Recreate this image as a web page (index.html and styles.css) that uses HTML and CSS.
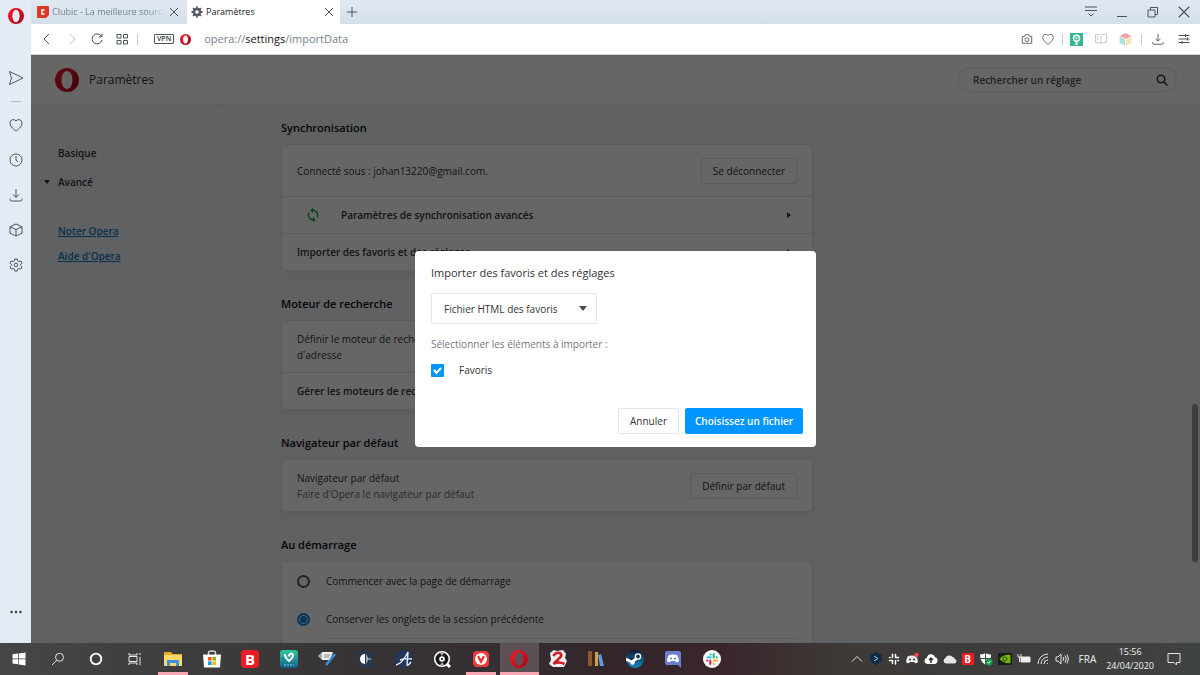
FILE: index.html
```html
<!DOCTYPE html>
<html lang="fr">
<head>
<meta charset="utf-8">
<title>Paramètres</title>
<link rel="stylesheet" href="styles.css">
</head>
<body>
<svg class="defs" aria-hidden="true">
  <defs>
    <linearGradient id="red" x1="0" y1="0" x2="1" y2="1"><stop offset="0" stop-color="#ff1b2d"/><stop offset="1" stop-color="#a70014"/></linearGradient>
    <linearGradient id="teal" x1="0" y1="0" x2="0" y2="1"><stop offset="0" stop-color="#2fc79d"/><stop offset="1" stop-color="#12608f"/></linearGradient>
    <linearGradient id="steam" x1="0" y1="0" x2="0" y2="1"><stop offset="0" stop-color="#0b1b3a"/><stop offset="1" stop-color="#1786be"/></linearGradient>
    <symbol id="opera" viewBox="0 0 24 24"><path fill="url(#red)" fill-rule="evenodd" d="M12 0a12 12 0 1 0 0 24a12 12 0 1 0 0-24zM12 3c3.400 0 5.500 4 5.500 9s-2.100 9-5.500 9s-5.500-4-5.500-9s2.100-9 5.500-9z"/></symbol>
    <symbol id="heart" viewBox="0 0 16 16"><path d="M8 14C4 11 2 9 2 6a3.300 3.300 0 0 1 6-2a3.300 3.300 0 0 1 6 2c0 3-2 5-6 8z"/></symbol>
    <symbol id="download" viewBox="0 0 16 16"><path d="M8 2v8M5 7.500l3 3l3-3M2 11.500v1q0 1.500 1.500 1.500h9q1.500 0 1.500-1.500v-1"/></symbol>
    <symbol id="close" viewBox="0 0 12 12"><path d="M2 2l8 8M10 2l-8 8"/></symbol>
    <symbol id="slack" viewBox="0 0 16 16"><path stroke-width="2" stroke-linecap="round" d="M6 1.500v4.500M2 6h1M10 2v4M14 6h-4M10 14.500V10M14 10h-1M6 14v-4M2 10h4"/></symbol>
  </defs>
</svg>
<div class="desktop">
  <div class="browser">
    <nav class="sidebar" aria-label="Barre latérale">
      <button class="opera-menu" aria-label="Menu Opera"><svg class="i16"><use href="#opera"/></svg></button>
      <button aria-label="Flow"><svg class="line i16" viewBox="0 0 16 16"><path d="M1.500 1.500L15 8L1.500 14.500L3.500 8z"/></svg></button>
      <span class="side-rule"></span>
      <button aria-label="Favoris"><svg class="line i16"><use href="#heart"/></svg></button>
      <button aria-label="Historique"><svg class="line i16" viewBox="0 0 16 16"><circle cx="8" cy="8" r="6"/><path d="M8 4v4l2 2"/></svg></button>
      <button aria-label="Téléchargements"><svg class="line i16"><use href="#download"/></svg></button>
      <button aria-label="Extensions"><svg class="line i16" viewBox="0 0 16 16"><path d="M8 2l6 2.800v6.400L8 14l-6-2.800V4.800zM2 4.800l6 2.700l6-2.700M8 7.500V14"/></svg></button>
      <button aria-label="Réglages"><svg class="line i16" viewBox="0 0 16 16"><path d="M6.800 2h2.400l.5 1.900 1.200.7 1.900-.6 1.200 2.100-1.400 1.400v1l1.400 1.400-1.200 2.100-1.900-.6-1.200.7-.5 1.900H6.800l-.5-1.900-1.200-.7-1.900.6L2 9.900l1.400-1.400v-1L2 6.100 3.200 4l1.900.6 1.200-.7z"/><circle cx="8" cy="8" r="1.800"/></svg></button>
      <button class="more" aria-label="Plus"><svg class="i16" viewBox="0 0 16 16" fill="#333"><circle cx="3.500" cy="8" r="1.200"/><circle cx="8" cy="8" r="1.200"/><circle cx="12.500" cy="8" r="1.200"/></svg></button>
    </nav>
    <div class="window">
      <header class="tabs">
        <div class="tab">
          <svg class="i12" viewBox="0 0 12 12"><path fill="#d93a26" d="M0 1q0-1 1-1h10q1 0 1 1v8l-3 3H1q-1 0-1-1z"/><path fill="none" stroke="#fff" stroke-width="1.400" d="M7.500 4H5v4h2.500"/></svg>
          <span class="tab-title faded">Clubic - La meilleure source</span>
          <button aria-label="Fermer l'onglet"><svg class="line i12"><use href="#close"/></svg></button>
        </div>
        <div class="tab active">
          <svg class="i12" viewBox="0 0 12 12"><circle cx="6" cy="6" r="3" fill="none" stroke="#555c63" stroke-width="2.400"/><path stroke="#555c63" stroke-width="2" d="M6 .5v2M6 9.500v2M.5 6h2M9.500 6h2M2.100 2.100l1.400 1.400M8.500 8.500l1.400 1.400M9.900 2.100L8.500 3.500M3.500 8.500L2.100 9.900"/></svg>
          <span class="tab-title">Paramètres</span>
          <button aria-label="Fermer l'onglet"><svg class="line i12"><use href="#close"/></svg></button>
        </div>
        <button class="new-tab" aria-label="Nouvel onglet"><svg class="line i12" viewBox="0 0 12 12"><path d="M6 1v10M1 6h10"/></svg></button>
        <div class="window-buttons">
          <button aria-label="Menu des onglets"><svg class="line i14" viewBox="0 0 14 14"><path d="M1 2h12M1 5.500h12M4.500 8.500L7 11l2.500-2.500"/></svg></button>
          <button aria-label="Réduire"><svg class="line i14" viewBox="0 0 14 14"><path d="M2 11.500h10"/></svg></button>
          <button aria-label="Restaurer"><svg class="line i14" viewBox="0 0 14 14"><path d="M2 5h7v7H2zM4.500 5V2.500h7v7H9"/></svg></button>
          <button aria-label="Fermer"><svg class="line i14" viewBox="0 0 12 12"><path d="M1.500 1.500l9 9M10.500 1.500l-9 9"/></svg></button>
        </div>
      </header>
      <div class="toolbar">
        <button aria-label="Précédent"><svg class="line i14" viewBox="0 0 14 14"><path d="M9 2L4 7l5 5"/></svg></button>
        <button class="off" aria-label="Suivant"><svg class="line i14" viewBox="0 0 14 14"><path d="M5 2l5 5l-5 5"/></svg></button>
        <button aria-label="Recharger"><svg class="line i14" viewBox="0 0 14 14"><path d="M11.500 4.500A5 5 0 1 0 12 8M12 1.500v3.300H8.700"/></svg></button>
        <button aria-label="Accès rapide"><svg class="line i14" viewBox="0 0 14 14"><path d="M2 2.500h4v3.500H2zM8.500 2.500h4v3.500h-4zM2 8.500h4V12H2zM8.500 8.500h4V12h-4z"/></svg></button>
        <span class="bar left"></span>
        <button class="vpn">VPN</button>
        <svg class="i11"><use href="#opera"/></svg>
        <span class="url">opera://<b>settings</b>/importData</span>
        <div class="tools">
          <button class="snap" aria-label="Capture"><svg class="line i12" viewBox="0 0 14 14"><path d="M1.500 4H4l1-2h4l1 2h2.500v8h-11z"/><circle cx="7" cy="7.800" r="2.200"/></svg></button>
          <button aria-label="Ajouter aux favoris"><svg class="line i14"><use href="#heart"/></svg></button>
          <span class="bar first-bar"></span>
          <button aria-label="Extension verte"><svg class="i13" viewBox="0 0 13 13"><path fill="#35b597" d="M0 0h13v13H0z"/><circle cx="6.500" cy="5.300" r="3" fill="none" stroke="#fff" stroke-width="1.500"/><circle cx="6.500" cy="5.300" r="1" fill="#fff"/><path stroke="#fff" stroke-width="2" d="M6.500 8.500V12"/></svg></button>
          <button aria-label="Lecture"><svg class="i14" viewBox="0 0 14 14" fill="none" stroke="#ccc"><path d="M1.500 2.500h4.500l1 1l1-1h4.500v8H8.500L7 12l-1.500-1.500h-4zM7 4v7M3.500 4.500v4"/></svg></button>
          <button aria-label="Cube"><svg class="i13" viewBox="0 0 13 13"><path fill="#f3a0ad" d="M6.500 0L12.500 3L6.500 6L.5 3z"/><path fill="#a9e3d3" d="M.5 3.700l5.500 2.800v6.200L.5 9.700z"/><path fill="#fbe0b0" d="M12.500 3.700L7 6.500v6.200l5.500-3z"/></svg></button>
          <span class="bar"></span>
          <button aria-label="Téléchargements"><svg class="line i14"><use href="#download"/></svg></button>
          <button class="tune" aria-label="Configuration"><svg class="line i12" viewBox="0 0 12 12"><path d="M.5 2.500h11M.5 6h11M.5 9.500h11M7.500 1v3M9.500 4.500v3M4 8v3"/></svg></button>
        </div>
      </div>
      <div class="page">
        <header class="page-head">
          <svg class="i24"><use href="#opera"/></svg>
          <h1>Paramètres</h1>
          <label class="search"><input type="text" placeholder="Rechercher un réglage" aria-label="Rechercher un réglage"><svg class="i12" viewBox="0 0 12 12" fill="none" stroke="#333" stroke-width="1.500"><circle cx="5" cy="5" r="3.800"/><path d="M8 8l3.500 3.500"/></svg></label>
        </header>
        <div class="page-body">
          <aside class="menu">
            <a class="item" href="#">Basique</a>
            <a class="item open" href="#">Avancé</a>
            <a class="link first" href="#">Noter Opera</a>
            <a class="link" href="#">Aide d'Opera</a>
          </aside>
          <main>
            <section>
              <h2>Synchronisation</h2>
              <div class="card">
                <div class="row tall"><span>Connecté sous : johan13220@gmail.com.</span><button class="btn">Se déconnecter</button></div>
                <div class="row nav"><svg class="i16" viewBox="0 0 24 24" fill="#0b9c3c"><path d="M12 4V1L8 5l4 4V6c3.310 0 6 2.690 6 6 0 1.010-.25 1.970-.7 2.800l1.460 1.460A7.930 7.930 0 0 0 20 12c0-4.420-3.580-8-8-8zm0 14c-3.310 0-6-2.690-6-6 0-1.010.25-1.970.7-2.800L5.240 7.740A7.930 7.930 0 0 0 4 12c0 4.420 3.580 8 8 8v3l4-4-4-4v3z"/></svg><b>Paramètres de synchronisation avancés</b><i class="arrow"></i></div>
                <div class="row"><b>Importer des favoris et des réglages</b><i class="arrow"></i></div>
              </div>
            </section>
            <section>
              <h2>Moteur de recherche</h2>
              <div class="card">
                <div class="row tall"><span>Définir le moteur de recherche<br>d'adresse</span></div>
                <div class="row"><b>Gérer les moteurs de recherche</b><i class="arrow"></i></div>
              </div>
            </section>
            <section>
              <h2>Navigateur par défaut</h2>
              <div class="card">
                <div class="row tall"><span>Navigateur par défaut<br><small>Faire d'Opera le navigateur par défaut</small></span><button class="btn">Définir par défaut</button></div>
              </div>
            </section>
            <section>
              <h2>Au démarrage</h2>
              <div class="card startup">
                <label class="choice"><input type="radio" name="start">Commencer avec la page de démarrage</label>
                <label class="choice"><input type="radio" name="start" checked>Conserver les onglets de la session précédente</label>
                <hr>
              </div>
            </section>
          </main>
        </div>
        <div class="scrim">
          <div class="dialog" role="dialog" aria-labelledby="dialog-title">
            <h3 id="dialog-title">Importer des favoris et des réglages</h3>
            <select aria-label="Source"><option>Fichier HTML des favoris</option></select>
            <p>Sélectionner les éléments à importer :</p>
            <label class="check"><input type="checkbox" checked>Favoris</label>
            <div class="actions"><button class="btn">Annuler</button><button class="btn primary">Choisissez un fichier</button></div>
          </div>
        </div>
        <span class="scrollbar"></span>
      </div>
    </div>
  </div>
  <footer class="taskbar">
    <div class="apps">
      <button aria-label="Démarrer"><svg class="i14" viewBox="0 0 14 14" fill="#fff"><path d="M.5 2.300L6 1.500v5H.5zM6.700 1.400L13.500.5v6H6.700zM.5 7.200H6v5l-5.500-.8zM6.700 7.200h6.800v6.200l-6.800-1z"/></svg></button>
      <button aria-label="Recherche"><svg class="pale i14" viewBox="0 0 14 14"><circle cx="8.500" cy="5.300" r="4"/><path d="M5.500 8.500L1 13"/></svg></button>
      <button aria-label="Cortana"><svg class="i14" viewBox="0 0 14 14" fill="none" stroke="#fff" stroke-width="1.800"><circle cx="7" cy="7" r="5.300"/></svg></button>
      <button aria-label="Vue des tâches"><svg class="pale i14" viewBox="0 0 14 14"><path d="M1 1v2h8V1M1 4.500h8v5H1zM1 13v-2h8v2M12 1v2M12 5v8"/></svg></button>
      <button class="running" aria-label="Explorateur"><svg class="i18" viewBox="0 0 18 18"><path fill="#e9a82a" d="M0 2h7l1.500 2H18v11H0z"/><path fill="#ffd766" d="M0 5h18v11H0z"/><path fill="#3b93dd" d="M3 10h12v6h-3v-3H6v3H3z"/></svg></button>
      <button aria-label="Store"><svg class="i18" viewBox="0 0 18 18"><path fill="none" stroke="#ddd" stroke-width="1.400" d="M5.500 5V2.500q0-1.500 3.500-1.500t3.500 1.500V5"/><path fill="#fff" d="M0 4.500h18L17 17.500H1z"/><path fill="#f25022" d="M5 7h3.600v3.600H5z"/><path fill="#7fba00" d="M9.400 7H13v3.600H9.400z"/><path fill="#00a4ef" d="M5 11.400h3.600V15H5z"/><path fill="#ffb900" d="M9.400 11.400H13V15H9.400z"/></svg></button>
      <button aria-label="Bitdefender"><span class="bit">B</span></button>
      <button aria-label="Vault"><svg class="i18" viewBox="0 0 18 18"><rect width="18" height="18" rx="3" fill="url(#teal)"/><path fill="none" stroke="#fff" stroke-width="2" d="M4.500 4Q6 9 9 11Q14.500 6.500 12.500 4Q10 2.500 8.500 6.500"/><path stroke="#9cd" stroke-dasharray="2 1" d="M4 15h10"/></svg></button>
      <button aria-label="Notes"><svg class="i18" viewBox="0 0 18 18"><path fill="#aaa" d="M0 6l4-4v8z"/><path fill="#eee" d="M4 2h11l-3 8H4z"/><path stroke="#888" d="M6 5h6M6 7h5"/><path stroke="#3692e0" stroke-width="2.400" d="M17 4L8 15"/></svg></button>
      <button aria-label="Contraste"><svg class="i16" viewBox="0 0 16 16"><path fill="#29384a" d="M0 0h16v16H0z"/><path fill="#fff" d="M8 3v10A5 5 0 0 1 8 3z"/><path fill="#9aa5b0" d="M9 3q4 5 0 10z"/><path stroke="#ddd" d="M10 8h4"/></svg></button>
      <button aria-label="A"><svg class="i18" viewBox="0 0 18 18"><circle cx="9" cy="9" r="9" fill="#23345d"/><path fill="none" stroke="#e7ecf7" stroke-width="1.400" d="M1 15Q7 14 13 2l-1 13q1 1 4-3M5 10q5-2 12-1"/></svg></button>
      <button aria-label="Disque"><svg class="i18" viewBox="0 0 18 18"><path stroke="#fff" stroke-width="3" d="M13 13l4 4"/><circle cx="9" cy="9" r="7.300" fill="#171717" stroke="#fff" stroke-width="1.600"/><circle cx="9" cy="9" r="2.800" fill="#fff"/><circle cx="9" cy="9" r="1"/><path fill="#aaa" d="M7 3l2 3l2-3zM7 15l2-3l2 3z"/></svg></button>
      <button class="running" aria-label="Vivaldi"><svg class="i18" viewBox="0 0 18 18"><rect x="1" y="1" width="16" height="16" rx="4" fill="#ef3939"/><circle cx="9" cy="9" r="6" fill="#fff"/><path fill="none" stroke="#e33" stroke-width="2.400" stroke-linecap="round" d="M6.500 7L9 11.500L11.500 7"/></svg></button>
      <button class="running current" aria-label="Opera"><svg class="i18"><use href="#opera"/></svg></button>
      <button aria-label="2"><svg class="i18" viewBox="0 0 18 18"><path fill="#eee" d="M1 3l4-3l3 1l6-1l3 4l-1 4l2 3l-3 6H4l-4-3l2-4z"/><path fill="none" stroke="#d31c25" stroke-width="2.600" d="M4.500 6q2-4 6-3q4 2-1 6l-5 5q5-3 11 0"/></svg></button>
      <button aria-label="Livres"><svg class="i18" viewBox="0 0 18 18"><path fill="#8a5a2e" d="M1 1h4v15H1z"/><path fill="#3a2a1c" d="M5 3h3v13H5z"/><path fill="#cfa24a" d="M8 2h3v14H8z"/><path fill="#5b9be0" d="M11 5l3-1l3 12h-4z"/></svg></button>
      <button aria-label="Steam"><svg class="i18" viewBox="0 0 18 18"><circle cx="9" cy="9" r="9" fill="url(#steam)"/><path stroke="#fff" stroke-width="3" d="M0 9l6 3l5-4"/><circle cx="12" cy="6.500" r="2.600" fill="#234" stroke="#fff" stroke-width="1.400"/><circle cx="6.500" cy="12.500" r="2.300" fill="#fff"/></svg></button>
      <button aria-label="Discord"><svg class="i18" viewBox="0 0 18 18"><path fill="#6a7fd0" d="M1 3q0-2 2-2h12q2 0 2 2v15l-3-3H3q-2 0-2-2z"/><path fill="#fff" d="M5 5q4-1 8 0q2 3 2 6q-2 2-3 1l-1-1H7l-1 1q-1 1-3-1q0-3 2-6z"/><circle cx="7" cy="8.500" r="1.100" fill="#6a7fd0"/><circle cx="11" cy="8.500" r="1.100" fill="#6a7fd0"/></svg></button>
      <button aria-label="Slack"><svg class="i18" viewBox="0 0 18 18" stroke-width="2.200" stroke-linecap="round"><circle cx="9" cy="9" r="9" fill="#fff"/><path stroke="#36c5f0" d="M4.500 7.300h3.200M7.500 4.300v.2"/><path stroke="#2eb67d" d="M10.700 4.200v3.200M13.700 7.300h.1"/><path stroke="#ecb22e" d="M10.700 10.700h3.200M10.700 13.800v.1"/><path stroke="#e01e5a" d="M7.300 10.700v3.200M4.200 10.700h.1"/></svg></button>
    </div>
    <div class="tray">
      <svg class="pale i14" viewBox="0 0 14 14"><path d="M2 9.500L7 4.500l5 5"/></svg>
      <svg class="i14" viewBox="0 0 14 14"><path fill="#0f2b46" d="M7 0l5.500 3v6.500L7 12.500v1.500L5 12 1.500 9.500V3z"/><path stroke="#9ac7e8" fill="none" d="M5 4l4 2.500L5 9"/></svg>
      <svg class="i12" stroke="#fff"><use href="#slack"/></svg>
      <svg class="i14" viewBox="0 0 14 14"><path fill="#eee" d="M3 4q4-1 8 0q2 3 2 6q-2 2-3 1l-1-1H5l-1 1q-1 1-3-1q0-3 2-6z"/><circle cx="5" cy="7.500" r="1" fill="#333"/><circle cx="9" cy="7.500" r="1" fill="#333"/><circle cx="11.500" cy="3" r="2.300" fill="#f04747"/></svg>
      <svg class="i14" viewBox="0 0 14 14"><path fill="#fff" d="M3.500 12a3.200 3.200 0 0 1-.5-6.300a4 4 0 0 1 7.800-.6A3.500 3.500 0 0 1 10.500 12z"/><path stroke="#333" stroke-width="1.500" fill="none" d="M7 11V6.500M5 8l2-2l2 2"/></svg>
      <svg class="i14" viewBox="0 0 14 14"><path fill="#e6e6e6" d="M3 11.500a2.800 2.800 0 0 1-.5-5.400a4 4 0 0 1 6.800-1.300a3 3 0 0 1 2.500 2.200a2.300 2.300 0 0 1-.8 4.500z"/></svg>
      <span class="bit small">B</span>
      <svg class="i14" viewBox="0 0 14 14"><path fill="#fff" d="M6.500 1q3 1.500 5.500 1.500q0 7-5.500 10.500Q1 9.500 1 2.500Q3.500 2.500 6.500 1z"/><path stroke="#444" d="M6.500 1v12M1 6.500h11"/><circle cx="10" cy="10" r="3.500" fill="#159c4b"/><path fill="none" stroke="#fff" d="M8.300 10l1.200 1.300l2.200-2.500"/></svg>
      <svg class="i14" viewBox="0 0 14 14"><path fill="#162016" d="M0 1h14v12H0z"/><path fill="#76b900" d="M1.500 7Q6 2 12.500 3v8Q6 12 1.500 7z"/><circle cx="7" cy="7" r="2" fill="none" stroke="#274a00"/></svg>
      <svg class="pale i14" viewBox="0 0 14 14"><path fill="#eee" d="M4 5h9v5H4z"/><path d="M1 2v3h3V2M2.500 5v5"/></svg>
      <svg class="pale i14" viewBox="0 0 14 14"><path d="M2 12A10 10 0 0 1 12 2M5 12a7 7 0 0 1 7-7M8 12a4 4 0 0 1 4-4M11 12l1-1"/></svg>
      <svg class="pale i14" viewBox="0 0 14 14"><path d="M1 5h2l3-3v10L3 9H1zM8 5q1.500 2 0 4M10 3.500q2.500 3.500 0 7M12 2.500q3 4.500 0 9"/></svg>
      <span>FRA</span>
      <time>15:56<br>24/04/2020</time>
      <svg class="pale i14" viewBox="0 0 14 14"><path d="M1 1.500h12v9H9.500V13L7 10.500H1z"/></svg>
    </div>
  </footer>
</div>
</body>
</html>
```
FILE: styles.css
```css
* { box-sizing: border-box; }
body { margin: 0; font: 10px/16px "Open Sans", "Noto Sans", sans-serif; color: #333; }
button { font: inherit; color: inherit; background: none; border: 0; padding: 0; display: flex; align-items: center; justify-content: center; }
h1, h2, h3, p { margin: 0; }
svg { display: block; flex: none; }
.defs { position: absolute; width: 0; height: 0; }
.i11 { width: 11px; height: 11px; }
.i12 { width: 12px; height: 12px; }
.i13 { width: 13px; height: 13px; }
.i14 { width: 14px; height: 14px; }
.i16 { width: 16px; height: 16px; }
.i18 { width: 18px; height: 18px; }
.i24 { width: 24px; height: 24px; }
.line { fill: none; stroke: #4b545c; }
.pale { fill: none; stroke: #e6e6e6; }

.desktop { height: 100vh; display: flex; flex-direction: column; overflow: hidden; }
.browser { flex: 1; min-height: 0; display: flex; }

.sidebar { width: 31px; background: #e3ecf5; display: flex; flex-direction: column; align-items: center; gap: 19px; padding: 8px 0 23px; }
.opera-menu { margin-bottom: 27px; }
.side-rule { width: 10px; height: 1px; background: #b4bfca; margin: -4px 0; }
.more { margin-top: auto; }

.window { flex: 1; min-width: 0; display: flex; flex-direction: column; }
.tabs { height: 24px; display: flex; background: linear-gradient(#e1e9f1, #d5dfe9); }
.tab { width: 156px; display: flex; align-items: center; gap: 3px; padding: 0 7px 0 6px; color: #75828e; font-size: 9px; }
.tab.active { width: 153px; background: #fff; color: #222; padding: 0 5px 0 4px; }
.tab-title { flex: 1; overflow: hidden; white-space: nowrap; }
.faded { mask-image: linear-gradient(90deg, #000 85%, transparent); }
.new-tab { width: 24px; }
.window-buttons { margin-left: auto; display: flex; gap: 17px; padding-right: 9px; }

.toolbar { height: 31px; background: #fff; border-bottom: 1px solid #cfd6dc; display: flex; align-items: center; gap: 11px; padding: 0 10px 0 9px; }
.off { opacity: .35; }
.bar { width: 1px; height: 11px; background: #c4c8cc; margin: 0 -2px; }
.bar.left { margin: 0 0 0 -3px; }
.bar.first-bar { margin: 0 -4px; }
.vpn { border: 1px solid #4b545c; border-radius: 1px; font-size: 7px; line-height: 8px; font-weight: 600; padding: 0 2px; margin: 0 -5px 0 5px; }
.url { font-size: 11px; color: #75818c; margin-left: 2px; }
.url b { font-weight: 400; color: #111; }
.tools { margin-left: auto; display: flex; align-items: center; gap: 11px; }
.snap { margin-right: -3px; }
.tune { margin-left: 2px; }

.page { flex: 1; min-height: 0; position: relative; overflow: hidden; background: #eff2f6; display: flex; flex-direction: column; }
.page-head { height: 50px; background: #fff; border-bottom: 1px solid #dde4ea; display: flex; align-items: center; gap: 10px; padding: 0 23px 0 24px; }
h1 { font-size: 12px; line-height: 20px; font-weight: 400; }
.search { margin-left: auto; width: 219px; height: 25px; border: 1px solid #e1e5e8; border-radius: 13px; display: flex; align-items: center; padding: 0 8px 0 14px; }
.search input { flex: 1; min-width: 0; border: 0; outline: 0; background: none; padding: 0; font: inherit; font-weight: 600; }
.search input::placeholder { color: #555; opacity: 1; }
.page-body { flex: 1; min-height: 0; display: flex; }
.menu { width: 188px; border-right: 1px solid #e0e5ea; display: flex; flex-direction: column; gap: 13px; padding: 40px 0 0 27px; font-weight: 600; }
.item { color: #333; text-decoration: none; }
.open::before { content: ""; display: inline-block; margin-left: -14px; margin-right: 8px; border: 3px solid transparent; border-top: 4px solid #333; border-bottom: 0; vertical-align: 2px; }
.link { color: #0f7cc4; margin-bottom: -4px; }
.first { margin-top: 20px; }
main { flex: 1; max-width: 594px; padding: 15px 0 0 62px; display: flex; flex-direction: column; gap: 25px; }
h2 { font-size: 11px; line-height: 16px; font-weight: 600; color: #111; margin-bottom: 8px; }
.card { background: #fff; border: 1px solid #e2e8ee; border-radius: 4px; box-shadow: 0 3px 8px rgba(60, 80, 110, .08); }
.row { min-height: 37px; display: flex; align-items: center; justify-content: space-between; padding: 0 15px; }
.row + .row { border-top: 1px solid #dfe3e6; }
.row b { font-weight: 600; }
.tall { min-height: 51px; }
.nav { padding-left: 23px; gap: 20px; }
.nav b { flex: 1; }
small { font-size: inherit; color: #6b6f73; }
.arrow { border: 3px solid transparent; border-left: 4px solid #333; border-right: 0; margin-right: 6px; }
.btn { height: 26px; border: 1px solid #dfe6ed; border-radius: 2px; padding: 0 11px; white-space: nowrap; }
.startup { padding-bottom: 38px; }
.choice { display: flex; align-items: center; gap: 16px; height: 38px; padding: 0 15px; }
.choice input { appearance: none; width: 13px; height: 13px; margin: 0; border: 2px solid #555; border-radius: 50%; }
.choice input:checked { border-color: #0a84e0; background: #0a84e0; box-shadow: inset 0 0 0 1px #fff; }
hr { border: 0; border-top: 1px solid #dfe3e6; margin: 0 15px 0 46px; }

.scrim { position: absolute; inset: 0; background: rgba(0, 0, 0, .6); display: flex; align-items: center; justify-content: center; }
.dialog { width: 401px; background: #fff; border-radius: 4px; padding: 14px 13px 13px 16px; display: flex; flex-direction: column; align-items: flex-start; }
h3 { font-size: 11px; line-height: 16px; font-weight: 400; margin-bottom: 12px; }
select { appearance: none; width: 166px; height: 31px; font: inherit; color: #333; padding: 0 12px; border: 1px solid #dde7f0; border-radius: 2px; background: #fff url("data:image/svg+xml,%3Csvg xmlns='http://www.w3.org/2000/svg' width='8' height='5'%3E%3Cpath fill='%23454c54' d='M0 0h8L4 5z'/%3E%3C/svg%3E") no-repeat right 9px center; }
.dialog p { color: #73787d; margin: 12px 0 10px; }
.check { display: flex; align-items: center; gap: 15px; }
.check input { appearance: none; width: 13px; height: 13px; margin: 0; border-radius: 1px; background: #0095ff url("data:image/svg+xml,%3Csvg xmlns='http://www.w3.org/2000/svg' width='13' height='13'%3E%3Cpath fill='none' stroke='white' stroke-width='2' d='M3 6l2.500 3L10 4'/%3E%3C/svg%3E"); }
.actions { align-self: flex-end; display: flex; gap: 6px; margin-top: 30px; }
.primary { background: #0095ff; border-color: #0095ff; color: #fff; font-weight: 600; padding: 0 9px; }
.scrollbar { position: absolute; right: 2px; top: 349px; width: 6px; height: 158px; border-radius: 3px; background: #3d3e40; }

.taskbar { height: 32px; display: flex; justify-content: space-between; color: #f0f0f0; background: linear-gradient(90deg, #454746, #373335 30%, #352e32 42%, #33252a 52%, #39262a 60%, #3d3937 70%, #3f4342); }
.apps { width: 731px; display: grid; grid-template-columns: repeat(19, 1fr); }
.apps button { border-bottom: 3px solid transparent; margin-right: 4px; margin-left: 4px; border-top: 3px solid transparent; }
.apps .running { border-bottom-color: #f6a7b2; }
.apps .current { background: #5d5053; margin: 0; }
.bit { width: 18px; height: 18px; border-radius: 4px; background: #ed1c24; color: #fff; font-size: 15px; line-height: 18px; font-weight: 700; text-align: center; }
.small { width: 12px; height: 12px; border-radius: 0; font-size: 10px; line-height: 12px; }
.tray { display: flex; align-items: center; gap: 5px; padding-right: 19px; }
.tray span:not(.bit) { margin: 0 5px; }
time { text-align: center; font-size: 9px; line-height: 14px; margin-right: 8px; }
```
